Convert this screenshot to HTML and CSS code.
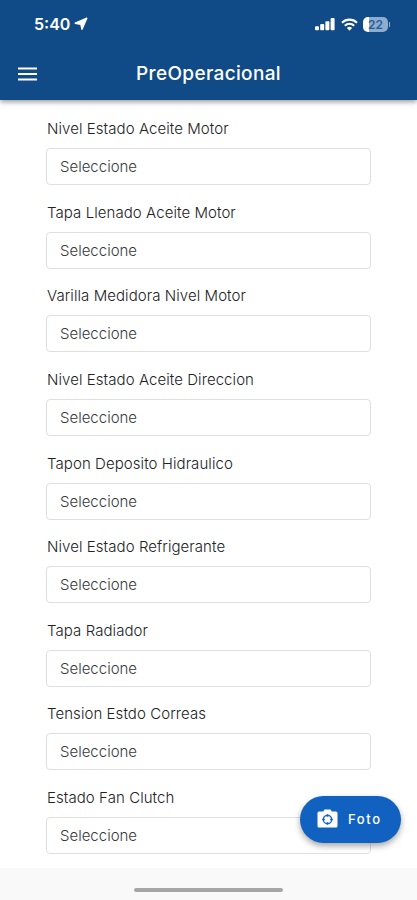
FILE: index.html
```html
<!DOCTYPE html>
<html lang="es">
    <head>
        <meta charset="utf-8">
        <meta name="viewport" content="width=device-width, initial-scale=1">
        <title>PreOperacional</title>
        <link rel="stylesheet" href="styles.css">
    </head>
    <body>
        <header class="header">
            <div class="statusbar">
                <div class="time">
                    <span class="clock">5:40</span>
                    <svg class="arrow" width="14" height="14" viewBox="0 0 14 14"><path d="M12.8 1.2 8 12.300 6.800 7.200 1.200 6.200Z" fill="#fff" stroke="#fff" stroke-width="1.4" stroke-linejoin="round"/></svg>
                </div>
                <div class="status">
                    <svg width="21" height="13" viewBox="0 0 21 13" fill="#fff">
                        <rect x="0" y="8.3" width="4" height="4" rx="1"/>
                        <rect x="5.2" y="6" width="4" height="6.3" rx="1"/>
                        <rect x="10.4" y="3.2" width="4" height="9.1" rx="1"/>
                        <rect x="15.6" y="0" width="4" height="12.3" rx="1"/>
                    </svg>
                    <svg width="17" height="13" viewBox="0 0 17 13" fill="none" stroke="#fff" stroke-width="2.1">
                        <path d="M1 4.7a10.6 10.6 0 0 1 15 0"/>
                        <path d="M3.8 7.7a6.7 6.7 0 0 1 9.4 0"/>
                        <path d="M8.5 12.8 5.9 10a3.8 3.8 0 0 1 5.2 0Z" fill="#fff" stroke="none"/>
                    </svg>
                    <div class="power">
                        <div class="battery">22</div>
                        <div class="cap"></div>
                    </div>
                </div>
            </div>
            <div class="toolbar">
                <svg class="menu" width="19" height="14" viewBox="0 0 19 14" stroke="#fff" stroke-width="2"><path d="M0 1.5h19M0 7h19M0 12.5h19"/></svg>
                <h1 class="title">PreOperacional</h1>
            </div>
        </header>

        <main class="form">
            <div class="field">
                <div class="label">Nivel Estado Aceite Motor</div>
                <div class="select">Seleccione</div>
            </div>
            <div class="field">
                <div class="label">Tapa Llenado Aceite Motor</div>
                <div class="select">Seleccione</div>
            </div>
            <div class="field">
                <div class="label">Varilla Medidora Nivel Motor</div>
                <div class="select">Seleccione</div>
            </div>
            <div class="field">
                <div class="label">Nivel Estado Aceite Direccion</div>
                <div class="select">Seleccione</div>
            </div>
            <div class="field">
                <div class="label">Tapon Deposito Hidraulico</div>
                <div class="select">Seleccione</div>
            </div>
            <div class="field">
                <div class="label">Nivel Estado Refrigerante</div>
                <div class="select">Seleccione</div>
            </div>
            <div class="field">
                <div class="label">Tapa Radiador</div>
                <div class="select">Seleccione</div>
            </div>
            <div class="field">
                <div class="label">Tension Estdo Correas</div>
                <div class="select">Seleccione</div>
            </div>
            <div class="field">
                <div class="label">Estado Fan Clutch</div>
                <div class="select">Seleccione</div>
            </div>
        </main>

        <footer class="bottom">
            <div class="home"></div>
        </footer>

        <button class="foto">
            <svg width="21" height="19" viewBox="0 0 21 19">
                <path d="M2 2.5h4.200L7.500.5h6l1.300 2H19a1.500 1.500 0 0 1 1.500 1.500v13A1.500 1.500 0 0 1 19 18.500H2A1.500 1.500 0 0 1 .5 17V4A1.500 1.500 0 0 1 2 2.500Z" fill="#fff"/>
                <circle cx="10.500" cy="10.500" r="4.200" fill="none" stroke="#1161c1" stroke-width="1.300"/>
                <path d="M10.500 5.200v2.600M10.500 13.200v2.600M5.200 10.500h2.600M13.200 10.500h2.600" stroke="#1161c1" stroke-width="1.600"/>
            </svg>
            <span>Foto</span>
        </button>
    </body>
</html>
```

FILE: styles.css
```css
* {
    box-sizing: border-box;
}

body {
    margin: 0;
    height: 900px;
    display: flex;
    flex-direction: column;
    overflow: hidden;
    background: #fff;
    font-family: Inter, "Liberation Sans", sans-serif;
}

.header {
    flex: none;
    height: 100px;
    background: #104b87;
    color: #fff;
    box-shadow: 0 2px 5px rgba(0, 0, 0, 0.4);
    z-index: 1;
}

.statusbar {
    height: 47px;
    padding: 1px 27px 0 34px;
    display: flex;
    justify-content: space-between;
    align-items: center;
}

.time, .status, .power {
    display: flex;
    align-items: center;
}

.time { gap: 4px; }
.status { gap: 5px; }
.power { gap: 1px; }

.clock {
    font-size: 16px;
    font-weight: 600;
}

.battery {
    width: 25px;
    height: 15px;
    border-radius: 5px;
    background: linear-gradient(90deg, #fff 24%, #8cacd0 24%);
    color: #2b5e96;
    font-size: 12px;
    font-weight: 600;
    line-height: 15px;
    text-align: center;
}

.cap {
    width: 1px;
    height: 5px;
    background: #8cacd0;
}

.toolbar {
    height: 53px;
    padding: 0 18px;
    display: grid;
    grid-template-columns: 19px 1fr 19px;
    align-items: center;
}

.title {
    margin: 0;
    font-size: 19px;
    font-weight: 500;
    letter-spacing: 0.35px;
    text-align: center;
}

.form {
    flex: none;
    height: 768px;
    padding: 19.4px 46px 0;
}

.field {
    height: 83.56px;
}

.label {
    padding-left: 1px;
    margin-bottom: 9px;
    color: #222;
    font-size: 15px;
    font-weight: 300;
    letter-spacing: 0.07px;
    line-height: 20px;
}

.select {
    height: 37px;
    padding: 0 13px;
    border: 1px solid #dedfe0;
    border-radius: 4px;
    color: #383838;
    font-size: 15px;
    font-weight: 300;
    line-height: 36px;
}

.bottom {
    height: 32px;
    padding-top: 20px;
    background: #f9f9f9;
}

.home {
    width: 149px;
    height: 4px;
    margin: 0 auto;
    border-radius: 2px;
    background: #a6a6a6;
}

/* floating button over the form */
.foto {
    position: absolute;
    right: 16px;
    bottom: 57px;
    width: 101px;
    height: 47px;
    padding: 0 0 2px 17px;
    display: flex;
    align-items: center;
    gap: 10px;
    border: none;
    border-radius: 24px;
    background: #1161c1;
    color: #fff;
    font-family: inherit;
    font-size: 13px;
    font-weight: 500;
    letter-spacing: 1.6px;
    box-shadow: 0 3px 6px rgba(0, 0, 0, 0.35);
    z-index: 2;
}
```
